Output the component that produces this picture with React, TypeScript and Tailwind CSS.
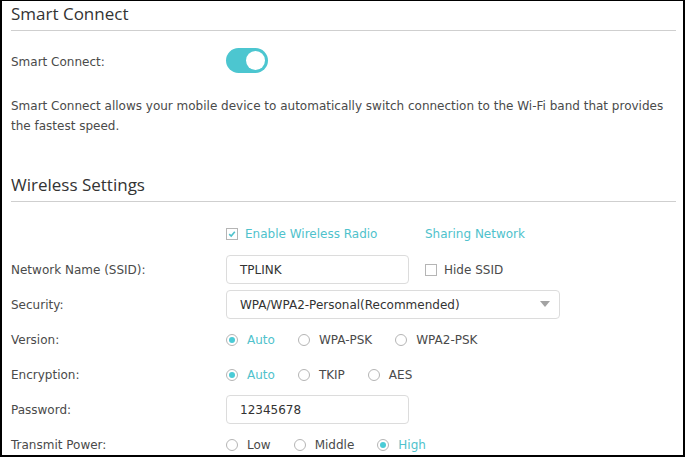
import React from "react";

const body = { fontFamily: '"DejaVu Sans", Verdana, sans-serif' };

function Radio({ checked, label, gap = "mr-[23px]" }: { checked?: boolean; label: string; gap?: string }) {
  return (
    <div className={`flex items-center ${gap}`}>
      <span className="flex h-[12px] w-[12px] items-center justify-center rounded-full border border-[#b5b5b5] bg-white">
        {checked && <span className="h-[6px] w-[6px] rounded-full bg-[#4acbd6]" />}
      </span>
      <span className={`ml-[9px] ${checked ? "text-[#4fc2cc]" : "text-[#4a4a4a]"}`}>{label}</span>
    </div>
  );
}

function Checkbox({ checked, label, teal }: { checked?: boolean; label: string; teal?: boolean }) {
  return (
    <div className="flex items-center">
      <span className="flex h-[12px] w-[12px] items-center justify-center border border-[#b5b5b5] bg-white">
        {checked && (
          <svg width="8" height="8" viewBox="0 0 8 8">
            <path d="M1.2 4.2 L3.2 6 L6.8 1.8" fill="none" stroke="#4fc2cc" strokeWidth="1.6" />
          </svg>
        )}
      </span>
      <span className={`ml-[7px] ${teal ? "text-[#4fc2cc]" : "text-[#4a4a4a]"}`}>{label}</span>
    </div>
  );
}

function Row({ label, children }: { label: string; children: React.ReactNode }) {
  return (
    <div className="flex h-[29px] items-center">
      <div className="w-[215px] pt-[1px] text-[#4a4a4a]">{label}</div>
      <div className="flex items-center">{children}</div>
    </div>
  );
}

export default function App() {
  return (
    <div
      className="h-[457px] w-[685px] overflow-hidden border-t border-r-2 border-b-2 border-l-2 border-black bg-white pl-[9px] pr-[7px] text-[12px]"
      style={body}
    >
      <div
        className="border-b border-[#cfcfcf] pb-[4px] text-[17px] leading-[25px] text-[#333]"
        style={{ fontFamily: '"Open Sans", sans-serif' }}
      >
        Smart Connect
      </div>
      <div className="mt-[16px] flex h-[26px] items-center">
        <div className="w-[215px] pt-[3px] text-[#4a4a4a]">Smart Connect:</div>
        <div className="flex h-[25px] w-[42px] items-center justify-end rounded-full bg-[#4cc6d0] pr-[3px]">
          <span className="h-[19px] w-[19px] rounded-full bg-white" />
        </div>
      </div>
      <p className="mt-[23px] leading-[20px] text-[#4a4a4a]">
        Smart Connect allows your mobile device to automatically switch connection to the Wi-Fi band that provides the fastest speed.
      </p>
      <div
        className="mt-[36px] border-b border-[#cfcfcf] pb-[4px] text-[17px] leading-[25px] text-[#333]"
        style={{ fontFamily: '"Open Sans", sans-serif' }}
      >
        Wireless Settings
      </div>
      <div className="mt-[22px] flex h-[20px] items-center pl-[215px]">
        <div className="w-[199px]">
          <Checkbox checked teal label="Enable Wireless Radio" />
        </div>
        <span className="text-[#4fc2cc]">Sharing Network</span>
      </div>
      <div className="mt-[11px] flex flex-col gap-[6px]">
        <Row label="Network Name (SSID):">
          <div className="flex h-[29px] w-[183px] items-center rounded-[4px] border border-[#dcdcdc] pl-[13px] text-[#333]">
            TPLINK
          </div>
          <div className="ml-[16px]">
            <Checkbox label="Hide SSID" />
          </div>
        </Row>
        <Row label="Security:">
          <div className="flex h-[29px] w-[334px] items-center justify-between rounded-[4px] border border-[#dcdcdc] pl-[13px] pr-[9px] text-[#333]">
            <span>WPA/WPA2-Personal(Recommended)</span>
            <svg width="10" height="7" viewBox="0 0 10 7">
              <path d="M0 0 H10 L5 6 Z" fill="#a3a3a3" />
            </svg>
          </div>
        </Row>
        <Row label="Version:">
          <Radio checked label="Auto" />
          <Radio label="WPA-PSK" />
          <Radio label="WPA2-PSK" />
        </Row>
        <Row label="Encryption:">
          <Radio checked label="Auto" />
          <Radio label="TKIP" />
          <Radio label="AES" />
        </Row>
        <Row label="Password:">
          <div className="flex h-[29px] w-[183px] items-center rounded-[4px] border border-[#dcdcdc] pl-[13px] text-[#333]">
            12345678
          </div>
        </Row>
        <Row label="Transmit Power:">
          <Radio label="Low" />
          <Radio label="Middle" />
          <Radio checked label="High" />
        </Row>
      </div>
    </div>
  );
}
